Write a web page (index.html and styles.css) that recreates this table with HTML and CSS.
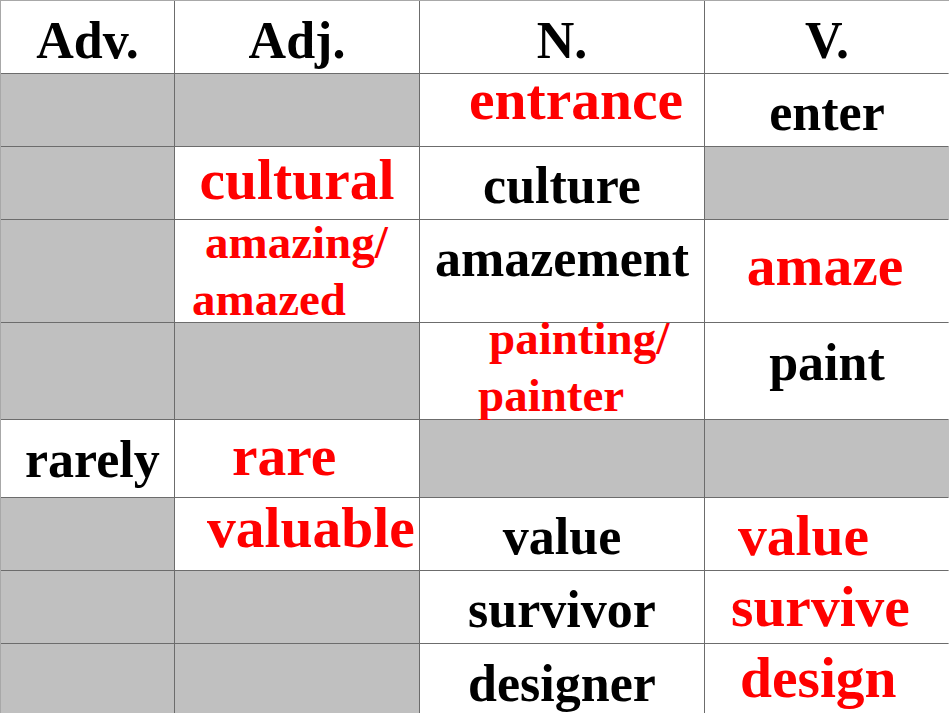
FILE: index.html
```html
<!DOCTYPE html>
<html lang="en">
<head>
<meta charset="utf-8">
<title>Word forms</title>
<link rel="stylesheet" href="styles.css">
</head>
<body>
<div class="table">
  <!-- header -->
  <div class="cell"><span class="t k c top-14">Adv.</span></div>
  <div class="cell"><span class="t k c top-14">Adj.</span></div>
  <div class="cell"><span class="t k c top-14">N.</span></div>
  <div class="cell"><span class="t k c top-14">V.</span></div>

  <!-- entrance -->
  <div class="cell shade"></div>
  <div class="cell shade"></div>
  <div class="cell"><span class="t r up-3 left-49">entrance</span></div>
  <div class="cell"><span class="t k c top-13">enter</span></div>

  <!-- cultural -->
  <div class="cell shade"></div>
  <div class="cell"><span class="t r c top-4">cultural</span></div>
  <div class="cell"><span class="t k c top-13">culture</span></div>
  <div class="cell shade"></div>

  <!-- amazing -->
  <div class="cell shade"></div>
  <div class="cell">
    <span class="t s up-6 left-30">amazing/</span>
    <span class="t s left-17">amazed</span>
  </div>
  <div class="cell"><span class="t k c top-13">amazement</span></div>
  <div class="cell"><span class="t r c top-17 nudge-left">amaze</span></div>

  <!-- painting -->
  <div class="cell shade"></div>
  <div class="cell shade"></div>
  <div class="cell">
    <span class="t s up-13 left-69">painting/</span>
    <span class="t s left-58">painter</span>
  </div>
  <div class="cell"><span class="t k c top-14">paint</span></div>

  <!-- rarely -->
  <div class="cell"><span class="t k top-14 left-24">rarely</span></div>
  <div class="cell"><span class="t r top-7 left-57">rare</span></div>
  <div class="cell shade"></div>
  <div class="cell shade"></div>

  <!-- valuable -->
  <div class="cell shade"></div>
  <div class="cell"><span class="t r top-1 left-32">valuable</span></div>
  <div class="cell"><span class="t k c top-13">value</span></div>
  <div class="cell"><span class="t r top-9 left-33">value</span></div>

  <!-- survivor -->
  <div class="cell shade"></div>
  <div class="cell shade"></div>
  <div class="cell"><span class="t k c top-13">survivor</span></div>
  <div class="cell"><span class="t r top-7 left-26">survive</span></div>

  <!-- designer -->
  <div class="cell shade"></div>
  <div class="cell shade"></div>
  <div class="cell"><span class="t k c top-14">designer</span></div>
  <div class="cell"><span class="t r top-5 left-35">design</span></div>
</div>
</body>
</html>
```
FILE: styles.css
```css
html, body {
  margin: 0;
  padding: 0;
  background: #ffffff;
}

body {
  width: 950px;
  height: 713px;
  overflow: hidden;
  font-family: "Liberation Serif", "Times New Roman", serif;
  font-weight: bold;
}

.table {
  display: grid;
  grid-template-columns: 173px 244px 284px 244px;
  grid-template-rows: 72px 72px 72px 102px 96px 77px 72px 72px 69px;
  gap: 1px;
  background: #6c6c6c;
  border-top: 1px solid #a8a8a8;
  border-left: 1px solid #a8a8a8;
  border-right: 1px solid #a8a8a8;
  width: 947px;
}

.cell {
  background: #ffffff;
  overflow: visible;
  min-width: 0;
}

.cell.shade {
  background: #c0c0c0;
}

.t {
  display: block;
  line-height: 1;
  white-space: nowrap;
}

.k {
  color: #000000;
  font-size: 52px;
}

.r {
  color: #ff0000;
  font-size: 57.5px;
}

.s {
  color: #ff0000;
  font-size: 47px;
  line-height: 57px;
}

.c {
  text-align: center;
}

.nudge-left {
  padding-right: 4px;
}

/* vertical placement */
.top-1 { margin-top: 1px; }
.top-4 { margin-top: 4px; }
.top-5 { margin-top: 5px; }
.top-7 { margin-top: 7px; }
.top-9 { margin-top: 9px; }
.top-13 { margin-top: 13px; }
.top-14 { margin-top: 14px; }
.top-17 { margin-top: 17px; }
.up-3 { margin-top: -3px; }
.up-6 { margin-top: -6px; }
.up-13 { margin-top: -13px; }

/* horizontal placement */
.left-17 { padding-left: 17px; }
.left-24 { padding-left: 24px; }
.left-26 { padding-left: 26px; }
.left-30 { padding-left: 30px; }
.left-32 { padding-left: 32px; }
.left-33 { padding-left: 33px; }
.left-35 { padding-left: 35px; }
.left-49 { padding-left: 49px; }
.left-57 { padding-left: 57px; }
.left-58 { padding-left: 58px; }
.left-69 { padding-left: 69px; }
```
